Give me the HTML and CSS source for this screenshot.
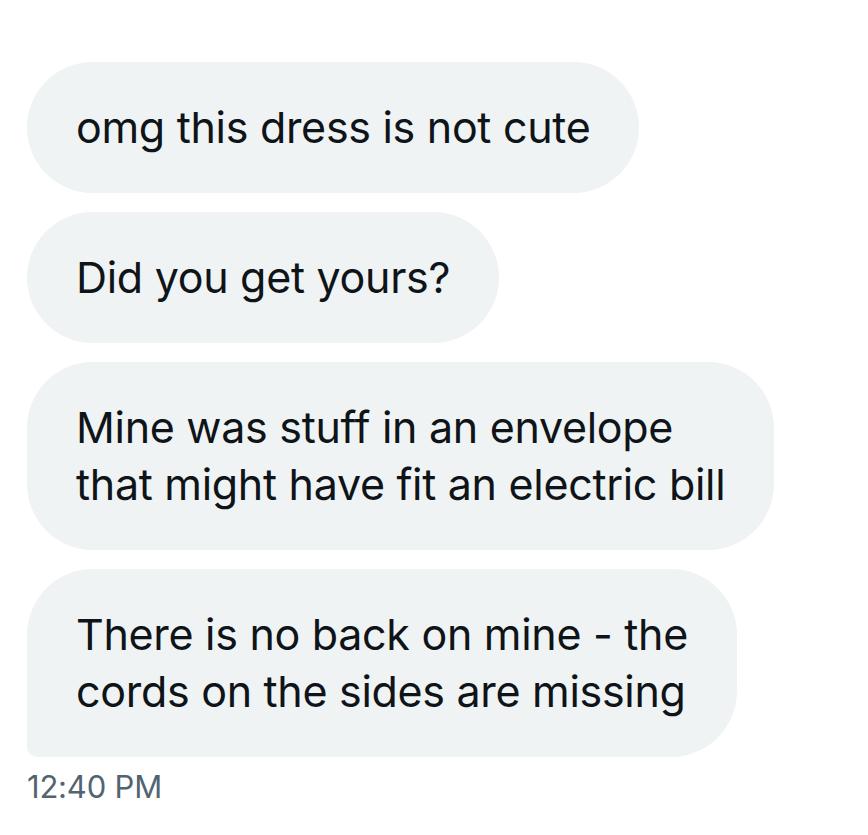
FILE: index.html
```html
<!DOCTYPE html>
<html lang="en">
<head>
    <meta charset="UTF-8">
    <meta name="viewport" content="width=device-width, initial-scale=1.0">
    <title>Mensagens</title>
    <link rel="stylesheet" href="styles.css">
</head>
<body>

    <!-- Conversa -->
    <div class="conversation">
        <div class="bubble">omg this dress is not cute</div>
        <div class="bubble">Did you get yours?</div>
        <div class="bubble">Mine was stuff in an envelope<br>that might have fit an electric bill</div>
        <div class="bubble last">There is no back on mine - the<br>cords on the sides are missing</div>
        <div class="timestamp">12:40 PM</div>
    </div>

</body>
</html>
```

FILE: styles.css
```css
html, body {
    margin: 0;
    padding: 0;
    background-color: #fff;
}

body {
    font-family: Inter, "Noto Sans", Arial, sans-serif;
    color: #0f1419;
}

.conversation {
    display: flex;
    flex-direction: column;
    align-items: flex-start;
    gap: 19px;
    padding: 62px 0 0 27px;
}

.bubble {
    background-color: #eff3f4;
    border-radius: 66px;
    padding: 37px 49px;
    font-size: 43px;
    line-height: 57px;
    letter-spacing: -0.3px;
}

.bubble.last {
    border-bottom-left-radius: 10px;
}

.timestamp {
    margin-top: -9px;
    font-size: 31px;
    line-height: 40px;
    color: #536471;
    letter-spacing: -0.2px;
}
```
